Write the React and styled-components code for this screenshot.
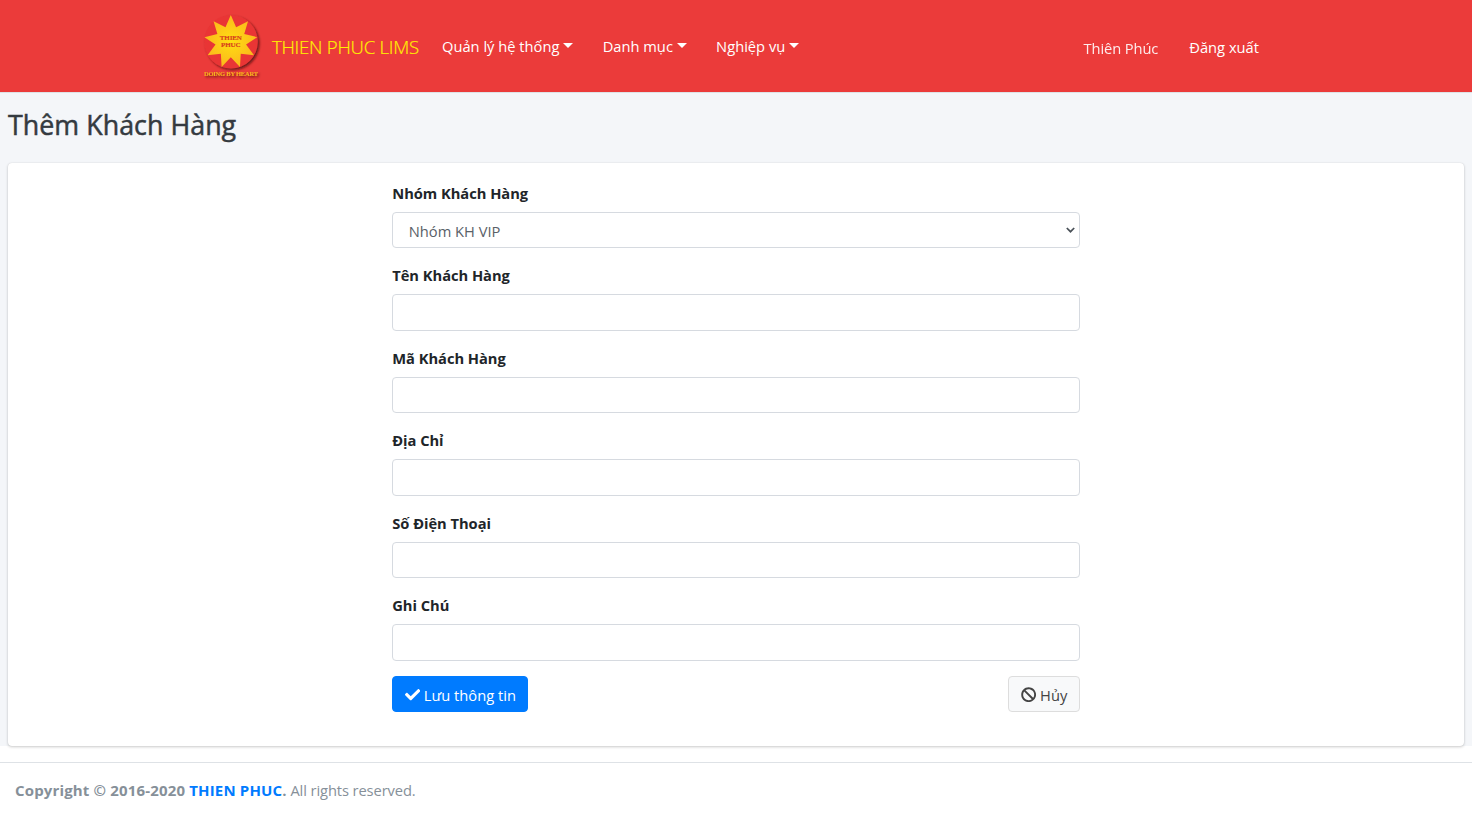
import React from "react";
import styled, { createGlobalStyle } from "styled-components";

const GlobalStyle = createGlobalStyle`
  *, *::before, *::after { box-sizing: border-box; }
  body {
    margin: 0;
    background: #fff;
    color: #212529;
    font-family: "Open Sans", "Noto Sans", sans-serif;
    font-size: 14.7px;
    line-height: 23px;
  }
`;

const Page = styled.div`
  display: flex;
  flex-direction: column;
  min-height: 817px;
`;

const Header = styled.header`
  height: 93px;
  background: #eb3b3a;
  border-bottom: 1px solid #dee2e6;
`;

const HeaderInner = styled.div`
  display: flex;
  align-items: center;
  width: 1092px;
  height: 92px;
  margin: 0 auto;
  padding: 0 7px;
`;

const Brand = styled.a`
  display: flex;
  align-items: center;
  width: 230px;
  margin-right: 15px;
  padding-left: 2px;
  color: #fff000;
  font-size: 18.6px;
  font-weight: 300;
  white-space: nowrap;
`;

const LogoSvg = styled.svg`
  flex: none;
  width: 70px;
  height: 75px;
  margin-right: 4px;
  margin-left: -1px;
`;

const BrandName = styled.span`
  letter-spacing: -0.25px;
  padding-top: 1px;
  -webkit-text-stroke: 0.2px #fff000;
`;

const Menu = styled.nav`
  display: flex;
  flex: 1;
  gap: 29.2px;
  padding-top: 1px;
`;

const MenuItem = styled.a`
  display: flex;
  align-items: center;
  color: #fff;
  white-space: nowrap;

  &::after {
    content: "";
    margin-left: 4px;
    margin-bottom: 2px;
    border-top: 5px solid #fff;
    border-right: 5px solid transparent;
    border-left: 5px solid transparent;
  }
`;

const Account = styled.div`
  display: flex;
  gap: 31px;
  padding-right: 16px;
  color: #fff;
  white-space: nowrap;
`;

const AccountLink = styled.a`
  padding-top: ${(p) => p.$drop || "0"};
  opacity: ${(p) => p.$opacity || 1};
  letter-spacing: ${(p) => p.$tracking || "0"};
`;

const Content = styled.main`
  height: 653px;
  padding: 0 8px;
  background: #f4f6f9;
`;

const Title = styled.h1`
  margin: 0;
  padding: 15px 0 21px;
  color: #343a40;
  font-size: 26.8px;
  font-weight: 500;
  line-height: 34px;
  letter-spacing: 0.04px;
  -webkit-text-stroke: 0.5px #343a40;
`;

const Card = styled.section`
  height: 583px;
  padding-top: 18.3px;
  border-radius: 4px;
  background: #fff;
  box-shadow: 0 0 1px rgba(0, 0, 0, 0.13), 0 1px 3px rgba(0, 0, 0, 0.2);
`;

const Form = styled.form`
  width: 687.5px;
  margin: 0 auto;
`;

const Field = styled.div`
  height: 82.45px;
`;

const Label = styled.label`
  display: block;
  margin-bottom: 8px;
  padding-top: 0.6px;
  line-height: 22px;
  font-weight: 700;
  letter-spacing: -0.03px;
`;

const Control = styled.div`
  display: flex;
  align-items: center;
  justify-content: space-between;
  height: 36.5px;
  padding: 2px 4px 0 15.5px;
  border: 1px solid #d6dae0;
  border-radius: 4px;
  background: #fff;
  color: #5a6168;
`;

const Chevron = styled.svg`
  width: 9px;
  height: 6px;
  margin-bottom: 2px;
`;

const Actions = styled.div`
  display: flex;
  justify-content: space-between;
`;

const Button = styled.button`
  display: flex;
  align-items: center;
  justify-content: center;
  gap: 4px;
  width: ${(p) => (p.$primary ? "136px" : "71.5px")};
  height: 36.5px;
  padding: 2px 0 0;
  border: 1px solid ${(p) => (p.$primary ? "#007bff" : "#ddd")};
  border-radius: 4px;
  background: ${(p) => (p.$primary ? "#007bff" : "#f8f9fa")};
  color: ${(p) => (p.$primary ? "#fff" : "#444")};
  font: inherit;
  white-space: nowrap;

  svg {
    width: 15.3px;
    height: 15.3px;
    margin-bottom: 1px;
    fill: currentColor;
  }
`;

const Footer = styled.footer`
  margin-top: 16px;
  padding: 16px 15px;
  border-top: 1px solid #dee2e6;
  color: #869099;
  letter-spacing: -0.1px;
`;

const Copyright = styled.strong`
  font-weight: 700;
  font-size: 15px;
  letter-spacing: 0.16px;

  a { color: #007bff; }
`;

const star = Array.from({ length: 18 }, (_, i) => {
  const r = i % 2 ? 15.5 : 26.8;
  const a = (i * Math.PI) / 9 - Math.PI / 2;
  return `${(32.8 + r * Math.cos(a)).toFixed(2)},${(32.8 + r * Math.sin(a)).toFixed(2)}`;
}).join(" ");

function Logo() {
  return (
    <LogoSvg viewBox="0 0 70 75">
      <defs>
        <filter id="soft" x="-20%" y="-20%" width="150%" height="150%">
          <feDropShadow dx="1.6" dy="1.6" stdDeviation="1.3" floodColor="#4a0808" floodOpacity="0.8" />
        </filter>
        <radialGradient id="gold">
          <stop offset="0" stopColor="#ffdf12" />
          <stop offset="1" stopColor="#fbb81c" />
        </radialGradient>
      </defs>
      <circle cx="33" cy="32.8" r="26.8" fill="#e93535" filter="url(#soft)" />
      <polygon points={star} fill="url(#gold)" />
      <g fontFamily="Liberation Serif, serif" fontWeight="700" textAnchor="middle">
        <g fill="#d8401c" stroke="#d8401c" strokeWidth="0.15" fontSize="7">
          <text x="32.8" y="30.6" textLength="22">THIEN</text>
          <text x="32.8" y="38.1" textLength="19.5">PHUC</text>
        </g>
        <text x="33" y="67.2" fontSize="6.5" fill="#f6b31c" textLength="54" filter="url(#soft)">
          DOING BY HEART
        </text>
      </g>
    </LogoSvg>
  );
}

const emptyFields = ["Tên Khách Hàng", "Mã Khách Hàng", "Địa Chỉ", "Số Điện Thoại", "Ghi Chú"];

export default function App() {
  return (
    <Page>
      <GlobalStyle />
      <Header>
        <HeaderInner>
          <Brand>
            <Logo />
            <BrandName>THIEN PHUC LIMS</BrandName>
          </Brand>
          <Menu>
            <MenuItem>Quản lý hệ thống</MenuItem>
            <MenuItem>Danh mục</MenuItem>
            <MenuItem>Nghiệp vụ</MenuItem>
          </Menu>
          <Account>
            <AccountLink $drop="5px" $opacity={0.9} $tracking="-0.1px">Thiên Phúc</AccountLink>
            <AccountLink $drop="4px">Đăng xuất</AccountLink>
          </Account>
        </HeaderInner>
      </Header>
      <Content>
        <Title>Thêm Khách Hàng</Title>
        <Card>
          <Form>
            <Field>
              <Label>Nhóm Khách Hàng</Label>
              <Control>
                <span>Nhóm KH VIP</span>
                <Chevron viewBox="0 0 9 6">
                  <path d="M0.8 1l3.7 3.7L8.2 1" fill="none" stroke="#495057" strokeWidth="1.7" />
                </Chevron>
              </Control>
            </Field>
            {emptyFields.map((name) => (
              <Field key={name}>
                <Label>{name}</Label>
                <Control />
              </Field>
            ))}
            <Actions>
              <Button type="button" $primary>
                <svg viewBox="0 0 512 512">
                  <path d="M173.898 439.404l-166.4-166.4c-9.997-9.997-9.997-26.206 0-36.204l36.203-36.204c9.997-9.998 26.207-9.998 36.204 0L192 312.69 432.095 72.596c9.997-9.997 26.207-9.997 36.204 0l36.203 36.204c9.997 9.997 9.997 26.206 0 36.204l-294.4 294.401c-9.998 9.997-26.207 9.997-36.204-.001z" />
                </svg>
                <span>Lưu thông tin</span>
              </Button>
              <Button type="button">
                <svg viewBox="0 0 512 512">
                  <path d="M256 8C119.034 8 8 119.033 8 256s111.034 248 248 248 248-111.034 248-248S392.967 8 256 8zm130.108 117.892c65.448 65.448 70 165.481 20.677 235.637L150.47 105.216c70.204-49.356 170.226-44.735 235.638 20.676zM125.892 386.108c-65.448-65.448-70-165.481-20.677-235.637L361.53 406.784c-70.203 49.356-170.226 44.736-235.638-20.676z" />
                </svg>
                <span>Hủy</span>
              </Button>
            </Actions>
          </Form>
        </Card>
      </Content>
      <Footer>
        <Copyright>Copyright © 2016-2020 <a>THIEN PHUC</a>.</Copyright> All rights reserved.
      </Footer>
    </Page>
  );
}
